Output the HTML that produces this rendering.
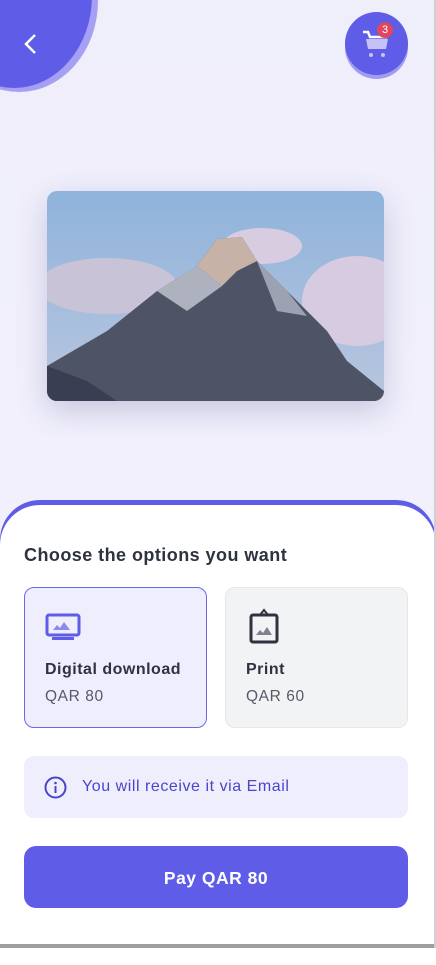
<!DOCTYPE html>
<html><head><meta charset="utf-8"><style>
*{margin:0;padding:0;box-sizing:border-box}
body{width:436px;height:948px;overflow:hidden;background:#f1effd;font-family:"Liberation Sans",sans-serif;position:relative}
.bg{position:absolute;inset:0;background:linear-gradient(#efeefb,#f4f2fd)}
.back{position:absolute;left:-60px;top:-90px;width:158px;height:182px;border-radius:50%;background:#a5a0f3}
.back2{position:absolute;left:-64px;top:-96px;width:156px;height:184px;border-radius:50%;background:#5f5ce8}
.cart{position:absolute;left:345px;top:16px;width:63px;height:63px;border-radius:50%;background:#a09cf2}
.cart2{position:absolute;left:345px;top:12px;width:63px;height:63px;border-radius:50%;background:#5f5ce8}
.badge{position:absolute;left:377px;top:22px;width:16px;height:16px;border-radius:50%;background:#e0465e;color:#fff;font-size:11px;text-align:center;line-height:16px}
.img{position:absolute;left:47px;top:191px;width:337px;height:210px;border-radius:10px;overflow:hidden;box-shadow:0 10px 30px rgba(80,80,140,.25)}
.sheet{position:absolute;left:0;top:500px;width:436px;height:460px;background:#5f5ce8;border-radius:40px 40px 0 0}
.sheet2{position:absolute;left:0;top:505px;width:436px;height:460px;background:#fff;border-radius:40px 40px 0 0}
h2{position:absolute;left:24px;top:545px;font-size:18px;font-weight:bold;color:#2f3340;letter-spacing:0.45px}
.card{position:absolute;top:587px;width:183px;height:141px;border-radius:10px}
.t{position:absolute;left:20px;top:73px;font-size:16px;font-weight:bold;color:#2f3340;letter-spacing:0.5px}
.p{position:absolute;left:20px;top:100px;font-size:15.5px;color:#555a66;letter-spacing:0.6px}
.info{position:absolute;left:24px;top:756px;width:384px;height:62px;border-radius:10px;background:#efeefc;color:#4b45c9;font-size:16px;letter-spacing:0.55px}
.pay{position:absolute;left:24px;top:846px;width:384px;height:62px;border-radius:12px;background:#5f5ce8;color:#fff;font-size:17.5px;font-weight:bold;text-align:center;line-height:64px;letter-spacing:0.5px}
</style></head><body>
<div class="bg"></div>
<div class="back"></div><div class="back2"></div>
<svg style="position:absolute;left:22px;top:33px" width="18" height="22"><path d="M13 2L4 11L13 20" stroke="#fff" stroke-width="2.5" fill="none"/></svg>
<div class="cart"></div><div class="cart2"></div>
<svg style="position:absolute;left:360px;top:28px" width="30" height="32"><path d="M3 4H8L10 9H27" stroke="#fff" stroke-width="2.5" fill="none"/><path d="M6 11H28L26 21H8Z" fill="#c4c2f6"/><circle cx="11" cy="27" r="2" fill="#c4c2f6"/><circle cx="23" cy="27" r="2" fill="#c4c2f6"/></svg>
<div class="badge">3</div>
<div class="img"><svg width="337" height="210">
<defs><linearGradient id="s" x1="0" y1="0" x2="0" y2="1"><stop offset="0" stop-color="#8fb3dc"/><stop offset="1" stop-color="#b8c6de"/></linearGradient></defs>
<rect width="337" height="210" fill="url(#s)"/>
<ellipse cx="60" cy="95" rx="70" ry="28" fill="#c9c3d8"/><ellipse cx="310" cy="110" rx="55" ry="45" fill="#d6cbe0"/><ellipse cx="215" cy="55" rx="40" ry="18" fill="#d8cde0"/>
<polygon points="0,175 60,140 110,100 150,75 170,48 195,46 210,70 240,100 280,140 300,170 337,200 337,210 0,210" fill="#4e5366"/>
<polygon points="150,75 170,48 195,46 210,70 190,80 175,95" fill="#c6b2a6"/>
<polygon points="110,100 150,75 175,95 140,120" fill="#aeb2bf"/>
<polygon points="210,70 240,100 260,125 230,120" fill="#9da2b2"/>
<polygon points="0,210 0,175 40,190 70,210" fill="#3a3e52"/>
</svg></div>
<div class="sheet"></div><div class="sheet2"></div>
<h2>Choose the options you want</h2>
<div class="card" style="left:24px;background:#efeefc;border:1px solid #6c68ea">
<svg style="position:absolute;left:20px;top:25px" width="36" height="30"><rect x="2" y="2" width="32" height="20" rx="2" stroke="#5f5ce8" stroke-width="3" fill="none"/><rect x="7" y="24" width="22" height="3" fill="#5f5ce8"/><path d="M8 17L12 12L15 15L19 9L25 17Z" fill="#8b88ee"/></svg>
<div class="t">Digital download</div><div class="p">QAR 80</div></div>
<div class="card" style="left:225px;background:#f2f3f5;border:1px solid #e6e7ea">
<svg style="position:absolute;left:22px;top:20px" width="32" height="38"><path d="M16 2L20 7H12Z" stroke="#2f3340" stroke-width="2" fill="none"/><rect x="3" y="7" width="26" height="27" rx="2" stroke="#2f3340" stroke-width="3" fill="none"/><path d="M8 27L12 22L15 25L19 19L24 27Z" fill="#7d8190"/></svg>
<div class="t">Print</div><div class="p">QAR 60</div></div>
<div class="info"><svg style="position:absolute;left:20px;top:20px" width="23" height="23"><circle cx="11.5" cy="11.5" r="10" stroke="#4b45c9" stroke-width="2" fill="none"/><rect x="10.5" y="10" width="2" height="7" fill="#4b45c9"/><circle cx="11.5" cy="7" r="1.3" fill="#4b45c9"/></svg><span style="position:absolute;left:58px;top:22px">You will receive it via Email</span></div>
<div class="pay">Pay QAR 80</div>
<div style="position:absolute;left:0;top:944px;width:436px;height:4px;background:#9e9e9e"></div>
<div style="position:absolute;left:434px;top:0;width:2px;height:948px;background:#cfcfd6"></div>
</body></html>
